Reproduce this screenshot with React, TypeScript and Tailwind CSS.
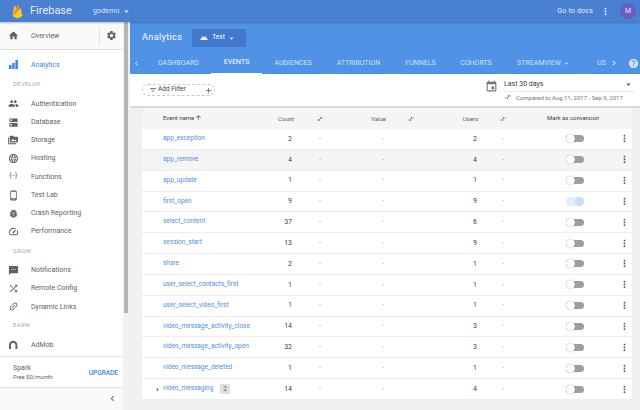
import type { ReactNode } from 'react';
import {
  MdHome, MdSettings, MdPeople, MdDns, MdPermMedia, MdLanguage, MdBugReport, MdSpeed,
  MdSms, MdShuffle, MdLink, MdArrowDropDown, MdChevronLeft, MdChevronRight, MdAdd,
  MdFilterList, MdArrowUpward, MdMoreVert, MdHelp, MdEvent, MdAndroid, MdPhoneAndroid, MdCompareArrows,
} from 'react-icons/md';

const events = [
  { name: 'app_exception', count: 2, users: 2 },
  { name: 'app_remove', count: 4, users: 4, hover: true },
  { name: 'app_update', count: 1, users: 1 },
  { name: 'first_open', count: 9, users: 9, on: true },
  { name: 'select_content', count: 37, users: 6 },
  { name: 'session_start', count: 13, users: 9 },
  { name: 'share', count: 2, users: 1 },
  { name: 'user_select_contacts_first', count: 1, users: 1 },
  { name: 'user_select_video_first', count: 1, users: 1 },
  { name: 'video_message_activity_close', count: 14, users: 3 },
  { name: 'video_message_activity_open', count: 32, users: 3 },
  { name: 'video_message_deleted', count: 1, users: 1 },
  { name: 'video_messaging', count: 14, users: 4, badge: 2 },
];

const tabs = [
  { label: 'DASHBOARD', cls: 'ml-[14px] w-[41px]' },
  { label: 'EVENTS', cls: 'ml-[12px] w-[51px] border-b border-white text-white' },
  { label: 'AUDIENCES', cls: 'ml-[12px] w-[38px]' },
  { label: 'ATTRIBUTION', cls: 'ml-[24px] w-[45px]' },
  { label: 'FUNNELS', cls: 'ml-[24px] w-[31px]' },
  { label: 'COHORTS', cls: 'ml-[24px] w-[32px]' },
  { label: 'STREAMVIEW', cls: 'ml-[25px] w-[54px]' },
  { label: 'US', cls: 'ml-[26px] w-[9px]' },
];

const gridCols = 'grid grid-cols-[21px_101px_28px_56px_36px_54px_39px_52px_55px_48px] items-center';

function FirebaseLogo() {
  return (
    <svg width="11" height="15" viewBox="0 0 11 15" className="shrink-0">
      <path d="M0.5 12 L2.5 1 L5 5 Z" fill="#ffc24a" />
      <path d="M0.5 12 L6 0.5 L7 5 Z" fill="#f9a825" />
      <path d="M0.5 12 L8.5 4 L10.5 12 L5.5 14.5 Z" fill="#ffca28" />
      <path d="M0.5 12 L6 0.5 L7.5 5 Z" fill="#f57c00" opacity="0.75" />
    </svg>
  );
}

function BarsIcon() {
  return (
    <svg width="9" height="9" viewBox="0 0 9 9" fill="#3d84e0">
      <rect x="0" y="5" width="2.5" height="4" />
      <rect x="3.2" y="3" width="2.5" height="6" />
      <rect x="6.4" y="0" width="2.5" height="9" />
    </svg>
  );
}

function FunctionsIcon() {
  return <span className="w-[11px] text-center text-[7px] leading-none tracking-[-0.5px] text-[#616161]">{'{···}'}</span>;
}

function AdMobIcon() {
  return (
    <svg width="10" height="10" viewBox="0 0 10 10" fill="none" stroke="#616161" strokeWidth="2">
      <path d="M2 9 V5 a3.2 3.2 0 0 1 6.4 0 V9" />
    </svg>
  );
}

function NavLabel({ children, cls }: { children: ReactNode; cls: string }) {
  return <div className={`flex items-center pl-[13px] text-[6px] tracking-[0.3px] text-[#a8a8a8] ${cls}`}>{children}</div>;
}

function NavItem({ icon, label }: { icon: ReactNode; label: string }) {
  return (
    <div className="flex h-[18.3px] items-center text-[7px] text-[#616161]">
      <span className="flex w-[31px] justify-center pl-[3px] pr-[8px] text-[#616161]">{icon}</span>
      {label}
    </div>
  );
}

function Sidebar() {
  return (
    <aside className="flex w-[130px] shrink-0 bg-white font-['Roboto',sans-serif]">
      <div className="flex w-[123px] flex-col">
        <div className="flex h-[28px] items-center border-b border-[#e0e0e0] bg-[#fafafa] pt-[1px]">
          <span className="flex w-[31px] justify-center pl-[3px] pr-[8px]"><MdHome size={11} color="#5f5f5f" /></span>
          <span className="flex-1 text-[7px] text-[#616161]">Overview</span>
          <span className="flex h-[18px] w-[24px] items-center justify-center border-l border-[#e0e0e0]">
            <MdSettings size={11} color="#5f5f5f" />
          </span>
        </div>
        <div className="flex h-[27px] items-center pt-[3px] text-[7px] text-[#3d84e0]">
          <span className="flex w-[31px] justify-center pl-[3px] pr-[8px]"><BarsIcon /></span>
          Analytics
        </div>
        <NavLabel cls="h-[18px] pb-[4px]">DEVELOP</NavLabel>
        <NavItem icon={<MdPeople size={11} />} label="Authentication" />
        <NavItem icon={<MdDns size={11} />} label="Database" />
        <NavItem icon={<MdPermMedia size={10} />} label="Storage" />
        <NavItem icon={<MdLanguage size={11} />} label="Hosting" />
        <NavItem icon={<FunctionsIcon />} label="Functions" />
        <NavItem icon={<MdPhoneAndroid size={11} />} label="Test Lab" />
        <NavItem icon={<MdBugReport size={11} />} label="Crash Reporting" />
        <NavItem icon={<MdSpeed size={11} />} label="Performance" />
        <NavLabel cls="h-[20.6px] pb-[1px]">GROW</NavLabel>
        <NavItem icon={<MdSms size={11} />} label="Notifications" />
        <NavItem icon={<MdShuffle size={11} />} label="Remote Config" />
        <NavItem icon={<MdLink size={11} className="-rotate-45" />} label="Dynamic Links" />
        <NavLabel cls="h-[20px] pb-[2px]">EARN</NavLabel>
        <NavItem icon={<AdMobIcon />} label="AdMob" />
        <div className="mt-[2px] flex h-[32px] items-center justify-between border-y border-[#e0e0e0] pl-[13px] pr-[5px] pt-[1px]">
          <div className="text-[6px] leading-[8.5px] text-[#616161]">
            <div className="text-[7px]">Spark</div>
            <div>Free $0/month</div>
          </div>
          <span className="pt-[2px] text-[6.5px] font-medium text-[#3d84e0]">UPGRADE</span>
        </div>
        <div className="flex h-[22px] items-center justify-end bg-[#fafafa] pr-[5px]">
          <MdChevronLeft size={11} color="#616161" />
        </div>
      </div>
      <div className="flex w-[7px] flex-col bg-[#f1f1f1]">
        <div className="ml-[1px] h-[291px] w-[4px] bg-[#b5b5b5]" />
      </div>
    </aside>
  );
}

function Toggle({ on }: { on?: boolean }) {
  if (on) {
    return (
      <div className="flex h-[9px] w-[18px] items-center justify-end rounded-full bg-[#e3edfb]">
        <div className="h-[9px] w-[9px] rounded-full bg-[#c9ddf9]" />
      </div>
    );
  }
  return (
    <div className="flex h-[7px] w-[18px] items-center rounded-full bg-[#9e9e9e]">
      <div className="h-[9px] w-[9px] rounded-full bg-white shadow-[0_0_1px_rgba(0,0,0,0.5)]" />
    </div>
  );
}

function DeltaIcon() {
  return <MdCompareArrows size={8} color="#616161" />;
}

function EventRow({ row }: { row: (typeof events)[number] }) {
  return (
    <div className={`${gridCols} h-[20.85px] border-b border-[#eeeeee] text-[7px] ${row.hover ? 'bg-[#f5f5f5]' : 'bg-white'}`}>
      <span className="flex justify-end pr-[1px]">
        {row.badge ? <MdArrowDropDown size={9} color="#616161" className="-rotate-90" /> : null}
      </span>
      <span className="flex items-center gap-[7px] whitespace-nowrap text-[6.5px] text-[#4f8fe0]">
        {row.name}
        {row.badge ? <span className="rounded-[1px] bg-[#e0e0e0] px-[3px] text-[6.5px] leading-[10px] text-[#616161]">{row.badge}</span> : null}
      </span>
      <span className="text-right text-[#424242]">{row.count}</span>
      <span className="text-center text-[#9e9e9e]">-</span>
      <span className="text-right text-[#9e9e9e]">-</span>
      <span />
      <span className="text-right text-[#424242]">{row.users}</span>
      <span className="text-center text-[#9e9e9e]">-</span>
      <span className="flex justify-end"><Toggle on={row.on} /></span>
      <span className="flex justify-end pr-[2.5px]"><MdMoreVert size={11} color="#5f5f5f" /></span>
    </div>
  );
}

export default function App() {
  return (
    <div className="flex h-[410px] w-[640px] flex-col overflow-hidden bg-[#eef0f2] font-['Roboto',sans-serif]">
      <header className="z-10 flex h-[22px] shrink-0 items-center bg-[#4a80d1] pl-[12px] pr-[4px] text-white shadow-[0_1px_2px_rgba(0,0,0,0.25)]">
        <FirebaseLogo />
        <span className="ml-[7px] text-[11px] text-[#e6eefa]">Firebase</span>
        <span className="ml-[21px] text-[7px] tracking-[0.2px] text-[#dce7f8]">godemo</span>
        <MdArrowDropDown size={11} color="#dce7f8" className="ml-[1px]" />
        <span className="ml-auto text-[7px] tracking-[0.2px] text-[#e6eefa]">Go to docs</span>
        <MdMoreVert size={11} color="#e6eefa" className="ml-[7px]" />
        <span className="ml-[9px] flex h-[16px] w-[16px] items-center justify-center rounded-full bg-[#6a5cc0] text-[7px] text-[#e6e2f8]">M</span>
      </header>
      <div className="flex min-h-0 flex-1">
        <Sidebar />
        <main className="flex min-w-0 flex-1 flex-col">
          <div className="flex h-[30px] shrink-0 items-center bg-[#4f92e6] pl-[12px] pt-[2px] text-white">
            <span className="text-[9px] tracking-[0.4px]">Analytics</span>
            <span className="ml-[10px] flex h-[18px] w-[54px] items-center bg-[#4379cc] pl-[8px] text-[6.5px]">
              <MdAndroid size={8} />
              <span className="ml-[4px]">Test</span>
              <MdArrowDropDown size={9} className="ml-[2px]" />
            </span>
          </div>
          <nav className="flex h-[22px] shrink-0 items-stretch bg-[#4f92e6] text-[7px] text-[#cfe0f8]">
            <span className="flex w-[14px] items-center pl-[2px]"><MdChevronLeft size={9} /></span>
            {tabs.map((t) => (
              <span key={t.label} className={`flex items-center justify-center whitespace-nowrap ${t.cls}`}>
                {t.label}
                {t.label === 'STREAMVIEW' ? <MdArrowDropDown size={9} className="ml-[1px] shrink-0" /> : null}
              </span>
            ))}
            <span className="ml-[3px] flex items-center text-white"><MdChevronRight size={10} /></span>
            <span className="ml-auto flex items-center pr-[1px] text-[#d5e3f8]"><MdHelp size={11} /></span>
          </nav>
          <div className="flex h-[34px] shrink-0 items-center justify-between border-b-2 border-[#d9d9d9] bg-white pl-[12px] pr-[5px]">
            <div className="flex h-[12px] w-[73px] items-center rounded-full border border-dashed border-[#cccccc] pl-[6px] pr-[1px] text-[6.5px] text-[#424242]">
              <MdFilterList size={8} color="#616161" />
              <span className="ml-[1px]">Add Filter</span>
              <MdAdd size={9} color="#616161" className="ml-auto" />
            </div>
            <div className="flex w-[150px] items-start">
              <MdEvent size={13} color="#757575" className="mt-[1px] shrink-0" />
              <div className="ml-[6px] flex-1">
                <div className="flex h-[13px] items-center justify-between border-b border-[#eeeeee] pr-[1px] text-[7px] text-[#424242]">
                  Last 30 days
                  <MdArrowDropDown size={11} color="#616161" />
                </div>
                <div className="mt-[1px] flex items-center text-[6px] text-[#757575]">
                  <MdCompareArrows size={8} color="#616161" />
                  <span className="ml-[4px] whitespace-nowrap">Compared to Aug 11, 2017 - Sep 9, 2017</span>
                </div>
              </div>
            </div>
          </div>
          <div className="flex-1 pl-[12px] pr-[8px]">
            <div className={`${gridCols} h-[21px] bg-[#f5f5f5] text-[6px] text-[#616161]`}>
              <span />
              <span className="flex items-center gap-[1px] pb-[2px] text-[#424242]">Event name <MdArrowUpward size={7} /></span>
              <span className="-mr-[2px] text-right">Count</span>
              <span className="flex justify-center"><DeltaIcon /></span>
              <span className="-mr-[2px] text-right">Value</span>
              <span className="flex justify-center"><DeltaIcon /></span>
              <span className="-mr-[1px] text-right">Users</span>
              <span className="flex justify-center"><DeltaIcon /></span>
              <span className="col-span-2 whitespace-nowrap pb-[2px] pl-[18px] text-[#424242]">Mark as conversion</span>
            </div>
            {events.map((row) => <EventRow key={row.name} row={row} />)}
          </div>
        </main>
      </div>
    </div>
  );
}
